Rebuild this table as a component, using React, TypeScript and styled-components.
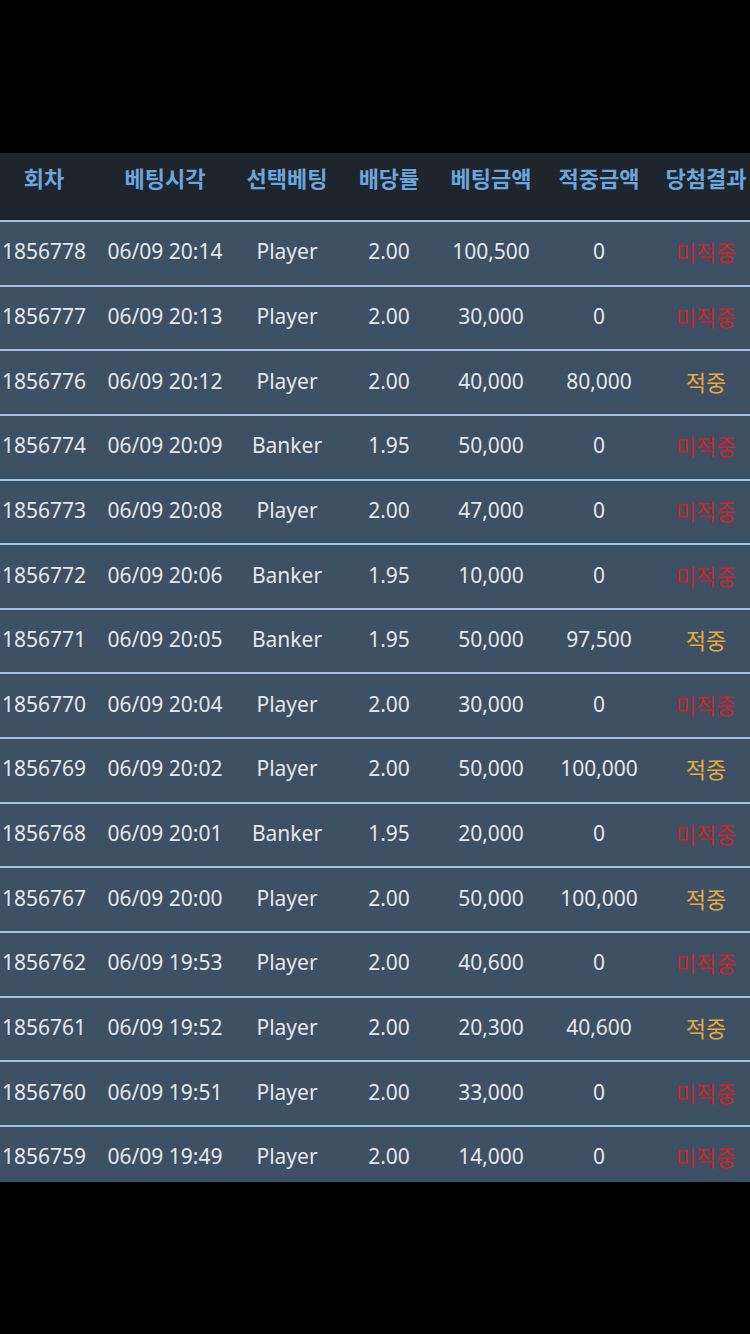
import React from "react";
import styled, { createGlobalStyle } from "styled-components";

const GlobalStyle = createGlobalStyle`
    html, body {
        margin: 0;
        padding: 0;
        background: #000;
    }
    body {
        font-family: "Noto Sans", "Noto Sans CJK KR", sans-serif;
    }
`;

const COLUMNS = "88px 154px 90px 114px 90px 126px 88px";

const Screen = styled.div`
    width: 750px;
    height: 1334px;
    background: #000;
    padding-top: 153px;
    box-sizing: border-box;
`;

const Table = styled.div`
    width: 750px;
    height: 1029px;
    overflow: hidden;
    background: #3d5064;
`;

const HeaderRow = styled.div`
    display: grid;
    grid-template-columns: ${COLUMNS};
    height: 67px;
    background: #1e252d;
    padding-bottom: 20px;
    box-sizing: border-box;
    align-items: center;
`;

const HeaderCell = styled.div`
    text-align: center;
    white-space: nowrap;
    font-family: "Noto Sans CJK KR", sans-serif;
    font-size: 22px;
    font-weight: 700;
    color: #6ba5de;
`;

const Row = styled.div`
    display: grid;
    grid-template-columns: ${COLUMNS};
    height: 64.65px;
    border-top: 2px solid #a3c4de;
    box-sizing: border-box;
    align-items: center;
    padding-bottom: 4px;
`;

const Cell = styled.div<{ $tone?: "win" | "lose" }>`
    text-align: center;
    white-space: nowrap;
    font-size: ${(p) => (p.$tone ? "22px" : "21px")};
    font-weight: 400;
    color: ${(p) =>
        p.$tone === "win" ? "#e6a93c" : p.$tone === "lose" ? "#cc2529" : "#e4e7ea"};
    font-family: ${(p) =>
        p.$tone ? `"Noto Sans CJK KR", sans-serif` : `"Noto Sans", "Noto Sans CJK KR", sans-serif`};
`;

interface IBet {
    round: string;
    time: string;
    pick: string;
    odds: string;
    amount: string;
    payout: string;
    win: boolean;
}

const headers = ["회차", "베팅시각", "선택베팅", "배당률", "베팅금액", "적중금액", "당첨결과"];

const bets: IBet[] = [
    { round: "1856778", time: "06/09 20:14", pick: "Player", odds: "2.00", amount: "100,500", payout: "0", win: false },
    { round: "1856777", time: "06/09 20:13", pick: "Player", odds: "2.00", amount: "30,000", payout: "0", win: false },
    { round: "1856776", time: "06/09 20:12", pick: "Player", odds: "2.00", amount: "40,000", payout: "80,000", win: true },
    { round: "1856774", time: "06/09 20:09", pick: "Banker", odds: "1.95", amount: "50,000", payout: "0", win: false },
    { round: "1856773", time: "06/09 20:08", pick: "Player", odds: "2.00", amount: "47,000", payout: "0", win: false },
    { round: "1856772", time: "06/09 20:06", pick: "Banker", odds: "1.95", amount: "10,000", payout: "0", win: false },
    { round: "1856771", time: "06/09 20:05", pick: "Banker", odds: "1.95", amount: "50,000", payout: "97,500", win: true },
    { round: "1856770", time: "06/09 20:04", pick: "Player", odds: "2.00", amount: "30,000", payout: "0", win: false },
    { round: "1856769", time: "06/09 20:02", pick: "Player", odds: "2.00", amount: "50,000", payout: "100,000", win: true },
    { round: "1856768", time: "06/09 20:01", pick: "Banker", odds: "1.95", amount: "20,000", payout: "0", win: false },
    { round: "1856767", time: "06/09 20:00", pick: "Player", odds: "2.00", amount: "50,000", payout: "100,000", win: true },
    { round: "1856762", time: "06/09 19:53", pick: "Player", odds: "2.00", amount: "40,600", payout: "0", win: false },
    { round: "1856761", time: "06/09 19:52", pick: "Player", odds: "2.00", amount: "20,300", payout: "40,600", win: true },
    { round: "1856760", time: "06/09 19:51", pick: "Player", odds: "2.00", amount: "33,000", payout: "0", win: false },
    { round: "1856759", time: "06/09 19:49", pick: "Player", odds: "2.00", amount: "14,000", payout: "0", win: false },
];

const App: React.FC = () => {
    return (
        <Screen>
            <GlobalStyle />
            <Table>
                <HeaderRow>
                    {headers.map((h) => (
                        <HeaderCell key={h}>{h}</HeaderCell>
                    ))}
                </HeaderRow>
                {bets.map((bet) => (
                    <Row key={bet.round}>
                        <Cell>{bet.round}</Cell>
                        <Cell>{bet.time}</Cell>
                        <Cell>{bet.pick}</Cell>
                        <Cell>{bet.odds}</Cell>
                        <Cell>{bet.amount}</Cell>
                        <Cell>{bet.payout}</Cell>
                        <Cell $tone={bet.win ? "win" : "lose"}>
                            {bet.win ? "적중" : "미적중"}
                        </Cell>
                    </Row>
                ))}
            </Table>
        </Screen>
    );
};

export default App;
